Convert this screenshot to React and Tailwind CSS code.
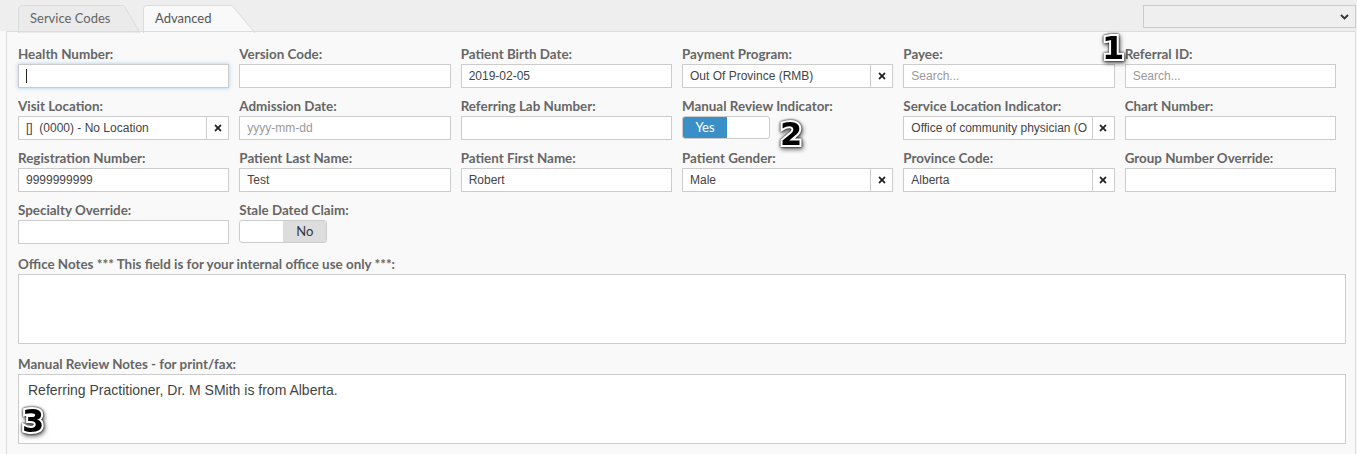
import { FaTimes } from 'react-icons/fa';

const labelCls = "block h-[18px] leading-[18px] mb-px text-[13.4px] font-bold text-[#666] font-['Lato',sans-serif] whitespace-nowrap";
const boxCls = "h-6 border border-[#cccccc] bg-white flex items-center text-[12px] text-[#444] font-['Liberation_Sans',Arial,sans-serif]";

const rows = [
  [
    { label: 'Health Number:', kind: 'focus' },
    { label: 'Version Code:' },
    { label: 'Patient Birth Date:', value: '2019-02-05' },
    { label: 'Payment Program:', kind: 'select', value: 'Out Of Province (RMB)' },
    { label: 'Payee:', placeholder: 'Search...' },
    { label: 'Referral ID:', placeholder: 'Search...' },
  ],
  [
    { label: 'Visit Location:', kind: 'select', value: '[]  (0000) - No Location' },
    { label: 'Admission Date:', placeholder: 'yyyy-mm-dd' },
    { label: 'Referring Lab Number:' },
    { label: 'Manual Review Indicator:', kind: 'toggle', on: true },
    { label: 'Service Location Indicator:', kind: 'select', value: 'Office of community physician (O' },
    { label: 'Chart Number:' },
  ],
  [
    { label: 'Registration Number:', value: '9999999999' },
    { label: 'Patient Last Name:', value: 'Test' },
    { label: 'Patient First Name:', value: 'Robert' },
    { label: 'Patient Gender:', kind: 'select', value: 'Male' },
    { label: 'Province Code:', kind: 'select', value: 'Alberta' },
    { label: 'Group Number Override:' },
  ],
  [
    { label: 'Specialty Override:' },
    { label: 'Stale Dated Claim:', kind: 'toggle', on: false },
  ],
];

const Field = ({ field }) => {
  const { kind, value, placeholder, on } = field;

  if (kind === 'toggle') {
    return (
      <div className="h-[23px] w-[88px] flex rounded-[3px] border border-[#cccccc] bg-white overflow-hidden text-[13px] font-['Lato',sans-serif]">
        {on ? (
          <>
            <div className="w-[44px] bg-[#3b8fc7] text-white flex items-center justify-center">Yes</div>
            <div className="flex-1" />
          </>
        ) : (
          <>
            <div className="w-[43px]" />
            <div className="flex-1 bg-[#dddddd] text-[#333] flex items-center justify-center">No</div>
          </>
        )}
      </div>
    );
  }

  if (kind === 'select') {
    return (
      <div className={boxCls}>
        <span className="flex-1 min-w-0 pl-[7px] overflow-hidden whitespace-pre">{value}</span>
        <span className="w-[22px] shrink-0 h-full border-l border-[#cccccc] flex items-center justify-center text-[#222]">
          <FaTimes size={10} />
        </span>
      </div>
    );
  }

  if (kind === 'focus') {
    return (
      <div className={`${boxCls} border-[#66afe9] shadow-[0_0_4px_rgba(102,175,233,0.6)]`}>
        <span className="ml-[7px] w-px h-[14px] bg-[#222]" />
      </div>
    );
  }

  return (
    <div className={boxCls}>
      <span className={`pl-[7px] ${placeholder ? 'text-[#999]' : ''}`}>{value || placeholder}</span>
    </div>
  );
};

const Marker = ({ n, className }) => (
  <span
    className={`absolute text-[32px] leading-none font-bold text-black font-['DejaVu_Sans',sans-serif] [-webkit-text-stroke:4px_white] [paint-order:stroke_fill] [filter:drop-shadow(0_0_1px_#000)_drop-shadow(1px_2px_2px_rgba(0,0,0,0.6))] ${className}`}
  >
    {n}
  </span>
);

const Tab = ({ label, active, width, slant }) => (
  <div className="relative h-[27px] flex items-center" style={{ width }}>
    <svg className="absolute inset-0" width={width} height="28" viewBox={`0 0 ${width} 28`}>
      <path
        d={`M0.5 28 V4 Q0.5 0.5 4 0.5 H${width - slant} L${width} 28`}
        fill={active ? '#f9f9f9' : '#ebebeb'}
        stroke="#dcdcdc"
      />
    </svg>
    <span className={`relative pl-[12px] text-[13px] font-['Lato',sans-serif] ${active ? 'text-[#555]' : 'text-[#666]'}`}>
      {label}
    </span>
  </div>
);

const App = () => {
  return (
    <div className="w-[1357px] h-[454px] bg-[#f9f9f9] overflow-hidden">
      <div className="h-[31px] bg-[#eeeeee] flex items-end pl-[18px] pr-px relative">
        <div className="flex items-end gap-[3px] relative top-px">
          <Tab label="Service Codes" width={122} slant={16} />
          <Tab label="Advanced" width={112} slant={23} active />
        </div>
        <div className="ml-auto self-start mt-[5px] w-[213px] h-[23px] bg-[#efefef] border border-[#cccccc] flex items-center justify-end pr-[6px]">
          <svg width="9" height="6" viewBox="0 0 9 6">
            <path d="M1 1 L4.5 4.5 L8 1" fill="none" stroke="#333" strokeWidth="1.8" />
          </svg>
        </div>
      </div>

      <div className="relative ml-[6px] w-[1350px] h-[423px] border-l border-r border-[#dddddd] border-t border-t-[#dcdcdc] pl-[11px] pt-[13px]">
        <div className="w-[1318px] flex flex-col gap-[9px]">
          {rows.map((row, i) => (
            <div key={i} className="grid grid-cols-6 gap-x-[10px]">
              {row.map((f) => (
                <div key={f.label}>
                  <label className={labelCls}>{f.label}</label>
                  <Field field={f} />
                </div>
              ))}
            </div>
          ))}
        </div>

        <div className="w-[1328px] mt-[11px]">
          <label className={`${labelCls} mb-[3px]`}>Office Notes *** This field is for your internal office use only ***:</label>
          <div className="h-[70px] border border-[#cccccc] bg-white" />
        </div>

        <div className="w-[1328px] mt-[11px]">
          <label className={`${labelCls} mb-[2px]`}>Manual Review Notes - for print/fax:</label>
          <div className="h-[70px] border border-[#cccccc] bg-white pt-[5px] pl-[9px] text-[14px] text-[#444] font-['Liberation_Sans',Arial,sans-serif]">
            Referring Practitioner, Dr. M SMith is from Alberta.
          </div>
        </div>

        <Marker n="1" className="left-[1095px] top-[0px]" />
        <Marker n="2" className="left-[773px] top-[86px]" />
        <Marker n="3" className="left-[15px] top-[373px]" />
      </div>
    </div>
  );
};

export default App;
